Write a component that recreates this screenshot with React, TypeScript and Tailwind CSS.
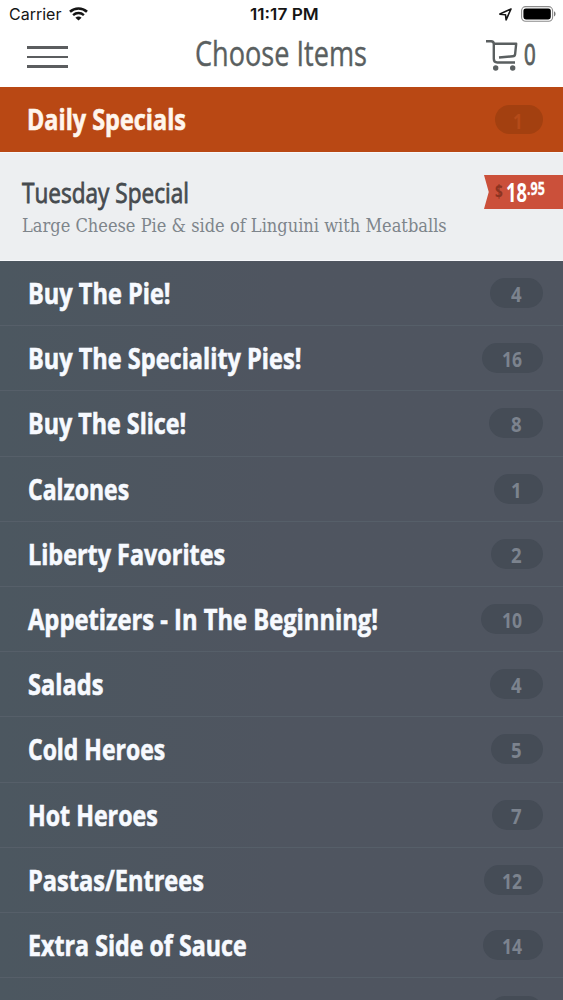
import { useLayoutEffect, useRef, useState } from 'react'
import clsx from 'clsx'

interface Category {
  name: string
  width: number
  count: number
  pill: string
}

const categories: Array<Category> = [
  { name: 'Buy The Pie!', width: 143, count: 4, pill: 'w-[53px]' },
  { name: 'Buy The Speciality Pies!', width: 273, count: 16, pill: 'w-[61px]' },
  { name: 'Buy The Slice!', width: 158, count: 8, pill: 'w-[54px]' },
  { name: 'Calzones', width: 101, count: 1, pill: 'w-[49px]' },
  { name: 'Liberty Favorites', width: 197, count: 2, pill: 'w-[52px]' },
  { name: 'Appetizers - In The Beginning!', width: 350, count: 10, pill: 'w-[62px]' },
  { name: 'Salads', width: 75, count: 4, pill: 'w-[53px]' },
  { name: 'Cold Heroes', width: 137, count: 5, pill: 'w-[52px]' },
  { name: 'Hot Heroes', width: 130, count: 7, pill: 'w-[51px]' },
  { name: 'Pastas/Entrees', width: 176, count: 12, pill: 'w-[59px]' },
  { name: 'Extra Side of Sauce', width: 219, count: 14, pill: 'w-[60px]' },
]

// Condenses a line of text horizontally until it takes up the given width
function Condensed({
  children,
  width,
  className,
}: {
  children: string
  width: number
  className?: string
}) {
  const ref = useRef<HTMLSpanElement>(null)
  const [scale, setScale] = useState(0.8)

  useLayoutEffect(() => {
    if (ref.current) setScale(width / ref.current.offsetWidth)
  }, [width, children])

  return (
    <span className={clsx('block whitespace-nowrap', className)} style={{ width }}>
      <span
        ref={ref}
        className="inline-block origin-left"
        style={{ transform: `scaleX(${scale})` }}
      >
        {children}
      </span>
    </span>
  )
}

function StatusBar() {
  return (
    <div className="grid h-7 grid-cols-3 items-center pl-[9px] pr-[7px] font-['Inter',sans-serif] text-base leading-none text-[#151515]">
      <div className="flex items-center gap-2">
        <Condensed width={52}>Carrier</Condensed>
        <svg className="h-[14px] w-[19px]" viewBox="0 0 19 14" fill="none" stroke="currentColor">
          <path d="M1 4.8C5.8.3 13.2.3 18 4.8" strokeWidth="2.6" />
          <path d="M4.1 8.1c3.1-2.8 7.7-2.8 10.8 0" strokeWidth="2.4" />
          <path d="M9.5 13.6 6.4 10.7c1.7-1.6 4.5-1.6 6.2 0Z" fill="currentColor" stroke="none" />
        </svg>
      </div>
      <div className="flex justify-center pl-[5px]">
        <Condensed width={69} className="font-semibold">
          11:17 PM
        </Condensed>
      </div>
      <div className="flex items-center justify-end gap-[9px]">
        <svg className="h-[13px] w-[13px]" viewBox="0 0 13 13" fill="none" stroke="currentColor">
          <path d="M12 1 .9 6.1l5.6.6.6 5.2Z" strokeWidth="1.6" strokeLinejoin="round" />
        </svg>
        <svg className="h-4 w-[35px]" viewBox="0 0 35 16" fill="none">
          <rect x=".6" y=".6" width="31" height="14.6" rx="4" stroke="#8c8c8c" strokeWidth="1.1" />
          <rect x="2.4" y="2.4" width="27.4" height="11" rx="2.4" fill="#000" />
          <path d="M33 5.3c2 .8 2 4.4 0 5.2Z" fill="#777" />
        </svg>
      </div>
    </div>
  )
}

function Header() {
  return (
    <header className="h-[87px] bg-white">
      <StatusBar />
      <div className="flex h-[54px] items-center justify-between pl-[27px] pr-[27px] text-[#5a5f60]">
        <button className="flex w-[41px] flex-col gap-[7px] pt-1" aria-label="Menu">
          <span className="h-[2.5px] w-full bg-[#5b5d5f]" />
          <span className="h-[2.5px] w-full bg-[#5b5d5f]" />
          <span className="h-[2.5px] w-full bg-[#5b5d5f]" />
        </button>
        <h1 className="-mt-[5px] pl-[7px] text-[35px] leading-[50px] [-webkit-text-stroke:0.4px]">
          <Condensed width={172}>Choose Items</Condensed>
        </h1>
        <div className="flex items-center gap-[6px]">
          <svg
            className="-mt-px h-8 w-8"
            viewBox="0 0 32 32"
            fill="none"
            stroke="currentColor"
            strokeWidth="2.4"
            strokeLinejoin="round"
          >
            <path d="M0 2.2h5.1c1.9 0 2.7 1.2 2.7 2.8v14.8c0 2.5 1.1 3.7 3.5 3.7H29" />
            <path d="M8 4.7h22.2l-1.1 10.6c-.2 1.3-.9 1.9-2.2 2l-13.9 1.2" />
            <circle cx="9.7" cy="29" r="2.7" fill="currentColor" stroke="none" />
            <circle cx="26.7" cy="29" r="2.7" fill="currentColor" stroke="none" />
          </svg>
          <Condensed
            width={12}
            className="-mt-[3px] text-[29px] leading-8 [-webkit-text-stroke:1px]"
          >
            0
          </Condensed>
        </div>
      </div>
    </header>
  )
}

function Price() {
  return (
    <div className="mt-[22px] flex h-[34px] w-[79px] items-center bg-[#cb503a] pl-[11px] [clip-path:polygon(0_0,100%_0,100%_100%,0_100%,6%_50%)]">
      <Condensed width={8} className="text-[17px] font-bold text-[#8c3421]">
        $
      </Condensed>
      <Condensed width={21} className="ml-[3px] text-[27px] leading-8 font-bold text-white">
        18
      </Condensed>
      <Condensed
        width={18}
        className="-mt-[9px] text-lg leading-5 font-bold text-white [-webkit-text-stroke:0.3px]"
      >
        .95
      </Condensed>
    </div>
  )
}

function CategoryRow({ name, width, count, pill }: Category) {
  return (
    <li className="flex h-[65.2px] items-center justify-between border-b border-[#565f69] pl-[27.5px] pr-[20px]">
      <Condensed
        width={width}
        className="text-[28px] leading-10 font-bold text-[#f7faff] [-webkit-text-stroke:0.6px]"
      >
        {name}
      </Condensed>
      <div
        className={clsx(
          'flex h-[30px] items-center justify-end rounded-full bg-[#454c56] pr-[21px]',
          pill,
        )}
      >
        <Condensed
          width={count > 9 ? 20 : 11}
          className="text-[22px] leading-7 font-bold text-[#7c838e]"
        >
          {String(count)}
        </Condensed>
      </div>
    </li>
  )
}

export default function App() {
  return (
    <div className="h-[1000px] w-[563px] overflow-hidden bg-[#4e5660] font-['Open_Sans','Noto_Sans',sans-serif]">
      <Header />

      {/* Open category */}
      <div className="flex h-[65px] items-center justify-between bg-[#b94814] pl-[27px] pr-[20px]">
        <Condensed
          width={159}
          className="-mt-px text-[28px] leading-10 font-bold text-[#fff6ed] [-webkit-text-stroke:0.6px]"
        >
          Daily Specials
        </Condensed>
        <div className="flex h-[29px] w-12 items-center justify-end rounded-full bg-[#a34010] pr-[20px]">
          <Condensed width={10} className="text-[22px] leading-7 font-bold text-[#b54b19]">
            1
          </Condensed>
        </div>
      </div>
      <div className="flex h-[109px] justify-between border-y border-[#f6f8fb] bg-[#edeff1] pl-[22px]">
        <div className="pt-[19px]">
          <Condensed
            width={167}
            className="text-[28px] leading-10 text-[#464b4f] [-webkit-text-stroke:0.8px]"
          >
            Tuesday Special
          </Condensed>
          <Condensed
            width={425}
            className="pt-px font-['DejaVu_Serif',serif] text-[18.5px] leading-[26px] text-[#7e858b]"
          >
            Large Cheese Pie & side of Linguini with Meatballs
          </Condensed>
        </div>
        <Price />
      </div>

      {/* Collapsed categories */}
      <ul className="bg-linear-to-r from-[#4c5760] to-[#4f5560] to-50%">
        {categories.map((category) => (
          <CategoryRow key={category.name} {...category} />
        ))}
      </ul>
      <div className="flex justify-end bg-linear-to-r from-[#4c5760] to-[#4f5560] to-50% pt-[18px] pr-[20px]">
        <div className="h-[30px] w-[53px] rounded-full bg-[#454c56]" />
      </div>
    </div>
  )
}
